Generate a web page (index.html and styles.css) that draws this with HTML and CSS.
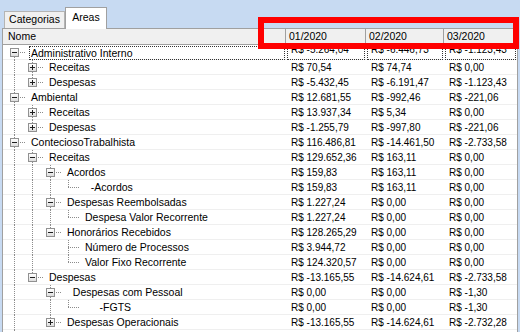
FILE: index.html
```html
<!DOCTYPE html>
<html lang="pt-BR">
<head>
  <meta charset="UTF-8" />
  <title>Areas</title>
  <link rel="stylesheet" href="styles.css">
</head>
<body>

  <!-- tab strip -->
  <div class="tabs">
    <div class="tab">Categorias</div>
    <div class="tab active">Areas</div>
  </div>

  <div class="panel">
    <div class="head">
      <div class="hcell">Nome</div>
      <div class="hcell">01/2020</div>
      <div class="hcell">02/2020</div>
      <div class="hcell">03/2020</div>
    </div>

    <div class="row focus">
      <div class="tree"><span class="n first"><span class="box minus"></span></span><span class="label">Administrativo Interno</span></div>
      <div class="val">R$ -5.264,04</div><div class="val">R$ -6.446,73</div><div class="val">R$ -1.123,43</div>
    </div>
    <div class="row">
      <div class="tree"><span class="g v"></span><span class="n mid"><span class="box plus"></span></span><span class="label">Receitas</span></div>
      <div class="val">R$ 70,54</div><div class="val">R$ 74,74</div><div class="val">R$ 0,00</div>
    </div>
    <div class="row">
      <div class="tree"><span class="g v"></span><span class="n end"><span class="box plus"></span></span><span class="label">Despesas</span></div>
      <div class="val">R$ -5.432,45</div><div class="val">R$ -6.191,47</div><div class="val">R$ -1.123,43</div>
    </div>
    <div class="row">
      <div class="tree"><span class="n mid"><span class="box minus"></span></span><span class="label">Ambiental</span></div>
      <div class="val">R$ 12.681,55</div><div class="val">R$ -992,46</div><div class="val">R$ -221,06</div>
    </div>
    <div class="row">
      <div class="tree"><span class="g v"></span><span class="n mid"><span class="box plus"></span></span><span class="label">Receitas</span></div>
      <div class="val">R$ 13.937,34</div><div class="val">R$ 5,34</div><div class="val">R$ 0,00</div>
    </div>
    <div class="row">
      <div class="tree"><span class="g v"></span><span class="n end"><span class="box plus"></span></span><span class="label">Despesas</span></div>
      <div class="val">R$ -1.255,79</div><div class="val">R$ -997,80</div><div class="val">R$ -221,06</div>
    </div>
    <div class="row">
      <div class="tree"><span class="n mid"><span class="box minus"></span></span><span class="label">ConteciosoTrabalhista</span></div>
      <div class="val">R$ 116.486,81</div><div class="val">R$ -14.461,50</div><div class="val">R$ -2.733,58</div>
    </div>
    <div class="row">
      <div class="tree"><span class="g v"></span><span class="n mid"><span class="box minus"></span></span><span class="label">Receitas</span></div>
      <div class="val">R$ 129.652,36</div><div class="val">R$ 163,11</div><div class="val">R$ 0,00</div>
    </div>
    <div class="row">
      <div class="tree"><span class="g v"></span><span class="g v"></span><span class="n mid"><span class="box minus"></span></span><span class="label">Acordos</span></div>
      <div class="val">R$ 159,83</div><div class="val">R$ 163,11</div><div class="val">R$ 0,00</div>
    </div>
    <div class="row">
      <div class="tree"><span class="g v"></span><span class="g v"></span><span class="g v"></span><span class="n end"></span><span class="label">  -Acordos</span></div>
      <div class="val">R$ 159,83</div><div class="val">R$ 163,11</div><div class="val">R$ 0,00</div>
    </div>
    <div class="row">
      <div class="tree"><span class="g v"></span><span class="g v"></span><span class="n mid"><span class="box minus"></span></span><span class="label">Despesas Reembolsadas</span></div>
      <div class="val">R$ 1.227,24</div><div class="val">R$ 0,00</div><div class="val">R$ 0,00</div>
    </div>
    <div class="row">
      <div class="tree"><span class="g v"></span><span class="g v"></span><span class="g v"></span><span class="n end"></span><span class="label">Despesa Valor Recorrente</span></div>
      <div class="val">R$ 1.227,24</div><div class="val">R$ 0,00</div><div class="val">R$ 0,00</div>
    </div>
    <div class="row">
      <div class="tree"><span class="g v"></span><span class="g v"></span><span class="n end"><span class="box minus"></span></span><span class="label">Honorários Recebidos</span></div>
      <div class="val">R$ 128.265,29</div><div class="val">R$ 0,00</div><div class="val">R$ 0,00</div>
    </div>
    <div class="row">
      <div class="tree"><span class="g v"></span><span class="g v"></span><span class="g"></span><span class="n mid"></span><span class="label">Número de Processos</span></div>
      <div class="val">R$ 3.944,72</div><div class="val">R$ 0,00</div><div class="val">R$ 0,00</div>
    </div>
    <div class="row">
      <div class="tree"><span class="g v"></span><span class="g v"></span><span class="g"></span><span class="n end"></span><span class="label">Valor Fixo Recorrente</span></div>
      <div class="val">R$ 124.320,57</div><div class="val">R$ 0,00</div><div class="val">R$ 0,00</div>
    </div>
    <div class="row">
      <div class="tree"><span class="g v"></span><span class="n end"><span class="box minus"></span></span><span class="label">Despesas</span></div>
      <div class="val">R$ -13.165,55</div><div class="val">R$ -14.624,61</div><div class="val">R$ -2.733,58</div>
    </div>
    <div class="row">
      <div class="tree"><span class="g v"></span><span class="g"></span><span class="n mid"><span class="box minus"></span></span><span class="label">  Despesas com Pessoal</span></div>
      <div class="val">R$ 0,00</div><div class="val">R$ 0,00</div><div class="val">R$ -1,30</div>
    </div>
    <div class="row">
      <div class="tree"><span class="g v"></span><span class="g"></span><span class="g v"></span><span class="n end"></span><span class="label">     -FGTS</span></div>
      <div class="val">R$ 0,00</div><div class="val">R$ 0,00</div><div class="val">R$ -1,30</div>
    </div>
    <div class="row">
      <div class="tree"><span class="g v"></span><span class="g"></span><span class="n end"><span class="box plus"></span></span><span class="label">Despesas Operacionais</span></div>
      <div class="val">R$ -13.165,55</div><div class="val">R$ -14.624,61</div><div class="val">R$ -2.732,28</div>
    </div>
    <div class="row">
      <div class="tree"><span class="g v"></span></div>
      <div class="val"></div><div class="val"></div><div class="val"></div>
    </div>
  </div>

  <!-- annotation drawn on the screenshot -->
  <div class="mark"></div>

</body>
</html>
```

FILE: styles.css
```css
:root {
  --dots-v: repeating-linear-gradient(to bottom, #8c8c8c 0 1px, transparent 1px 2px);
  --dots-h: repeating-linear-gradient(to right, #8c8c8c 0 1px, transparent 1px 2px);
}

html, body {
  margin: 0;
  height: 100%;
}

body {
  background: #c7daf2;
  font-family: "Liberation Sans", Arial, sans-serif;
  font-size: 10.5px;
  color: #000;
  overflow: hidden;
  position: relative;
}

.tabs {
  display: flex;
  align-items: flex-end;
  height: 28px;
  padding-left: 4px;
}

.tab {
  box-sizing: border-box;
  width: 61px;
  height: 17px;
  line-height: 15px;
  text-align: center;
  background: #f0f0f0;
  border: 1px solid #b4b4b4;
  border-bottom: none;
}

.tab.active {
  width: 42px;
  height: 22px;
  line-height: 18px;
  background: #fff;
  border-color: #a0a0a0;
  margin-bottom: -1px;
  position: relative;
  z-index: 1;
}

.panel {
  box-sizing: border-box;
  width: 516px;
  height: calc(100% - 28px);
  margin-left: 2px;
  background: #fff;
  border: 1px solid #a0a0a0;
  border-bottom: none;
  overflow: hidden;
}

.head, .row {
  display: grid;
  grid-template-columns: 283px 80px 78px 1fr;
}

.head {
  height: 16px;
  background: #f0f0f0;
  border-bottom: 1px solid #a0a0a0;
  box-sizing: border-box;
}

.hcell {
  line-height: 15px;
  padding-left: 3px;
  border-right: 1px solid #a0a0a0;
  white-space: nowrap;
}

.hcell:first-child {
  padding-left: 5px;
}

.hcell:last-child {
  border-right: none;
}

.row {
  height: 15px;
  background: linear-gradient(#efefef, #efefef) bottom / 100% 1px no-repeat;
}

.tree {
  display: flex;
  padding-left: 2px;
  min-width: 0;
}

.g {
  flex: none;
  width: 18px;
}

.g.v {
  background: var(--dots-v) 9px 0 / 1px 100% no-repeat;
}

.n {
  flex: none;
  box-sizing: border-box;
  width: 24px;
  padding: 3px 0 0 5px;
  background-repeat: no-repeat;
}

.n.first {
  background-image: var(--dots-h), var(--dots-v);
  background-position: 9px 7px, 9px 8px;
  background-size: 12px 1px, 1px 7px;
}

.n.mid {
  background-image: var(--dots-h), var(--dots-v);
  background-position: 9px 7px, 9px 0;
  background-size: 12px 1px, 1px 100%;
}

.n.end {
  background-image: var(--dots-h), var(--dots-v);
  background-position: 9px 7px, 9px 0;
  background-size: 12px 1px, 1px 8px;
}

.box {
  display: block;
  box-sizing: border-box;
  width: 9px;
  height: 9px;
  border: 1px solid #919191;
}

.box.minus {
  background:
    linear-gradient(#1e1e1e, #1e1e1e) 1px 3px / 5px 1px no-repeat,
    linear-gradient(#fff, #dedede);
}

.box.plus {
  background:
    linear-gradient(#1e1e1e, #1e1e1e) 1px 3px / 5px 1px no-repeat,
    linear-gradient(#1e1e1e, #1e1e1e) 3px 1px / 1px 5px no-repeat,
    linear-gradient(#fff, #dedede);
}

.label {
  flex: 1;
  line-height: 15px;
  padding-left: 2px;
  white-space: pre;
  overflow: hidden;
}

.val {
  font-size: 10px;
  line-height: 15px;
  padding-left: 5px;
  white-space: nowrap;
}

/* focused row: dotted rectangle per cell */
.focus .label, .focus .val {
  box-sizing: border-box;
  height: 14px;
  margin-top: 1px;
  line-height: 12px;
  border: 1px dotted #333;
}

.focus .label {
  padding-left: 1px;
  margin-right: 1px;
}

.focus .val {
  padding-left: 3px;
  margin: 1px 1px 0;
  line-height: 6px;
}

.mark {
  position: absolute;
  left: 258px;
  top: 17px;
  width: 261px;
  height: 32px;
  box-sizing: border-box;
  border: 6px solid #f00;
}
```
